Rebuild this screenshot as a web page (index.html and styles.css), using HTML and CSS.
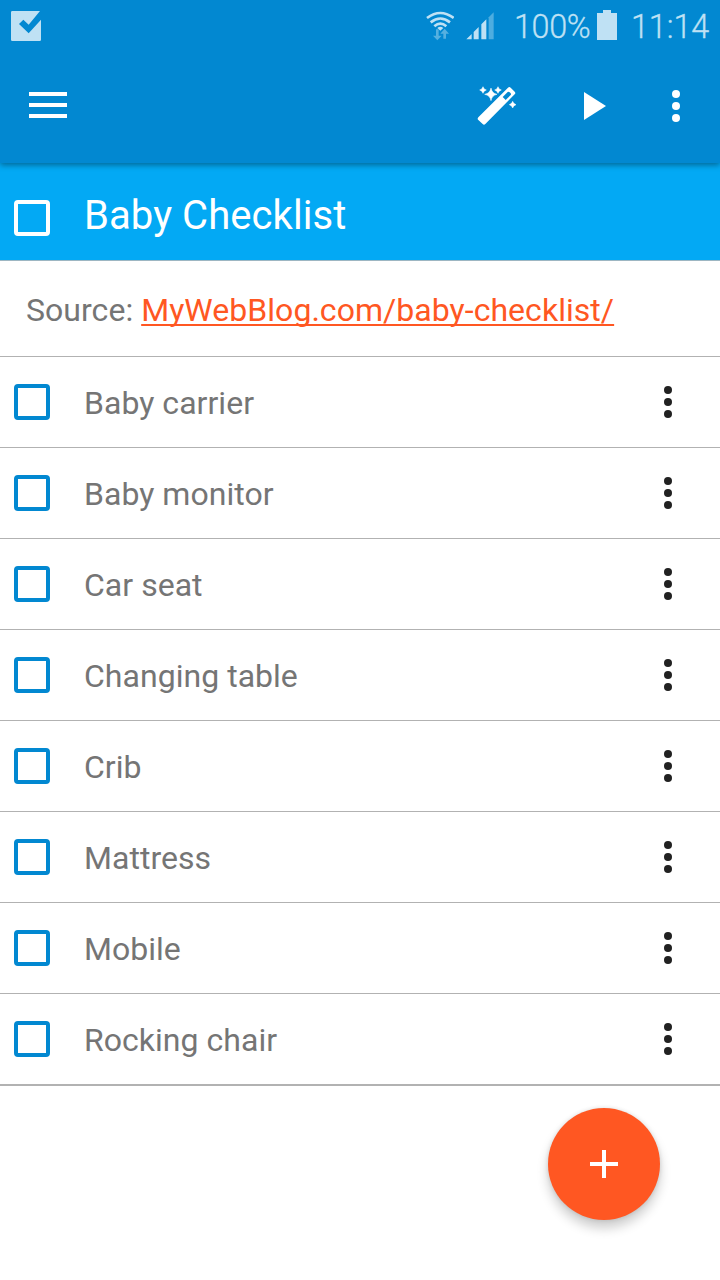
FILE: index.html
```html
<!DOCTYPE html>
<html lang="en">
<head>
<meta charset="utf-8">
<title>Baby Checklist</title>
<link rel="stylesheet" href="styles.css">
</head>
<body>
<svg width="0" height="0" class="defs">
  <symbol id="dots" viewBox="0 0 8 32"><circle cx="4" cy="4" r="4"/><circle cx="4" cy="16" r="4"/><circle cx="4" cy="28" r="4"/></symbol>
</svg>
<header class="appbar">
  <div class="status">
    <svg class="notice" width="30" height="30" viewBox="0 0 90 90"><path fill="#bfe1f4" d="M4 0H87L53 41L37 26L24 39L53 67L90 26V86Q90 90 86 90H4Q0 90 0 86V4Q0 0 4 0Z"/></svg>
    <svg class="wifi" width="28" height="30" viewBox="18 33 84 90">
      <g fill="none" stroke="#bfe1f4" stroke-width="8"><path d="M21 54Q61 24 101 54"/><path d="M32 67Q61 44 90 67"/><path d="M43 79Q61 63 79 79"/></g>
      <path fill="#bfe1f4" d="M52 84Q61 77 70 84L61 92Z"/>
      <path fill="#55b0e0" d="M48 88H56V107H65L52 121L39 107H48ZM70 116V101H61L74 86L87 101H78V116Z"/>
    </svg>
    <svg class="signal" width="28" height="28" viewBox="137 36 84 84"><path fill="#bfe1f4" d="M138 118L154 102V118ZM160 118V96L175 81V118ZM183 118V73L198 58V118Z"/><path fill="#4dade0" d="M205 118V52L220 37V118Z"/></svg>
    <span class="percent">100%</span>
    <svg class="battery" width="20" height="30" viewBox="0 0 20 30"><path fill="#bfe1f4" d="M6 0H14V3H20V30H0V3H6Z"/></svg>
    <span class="clock">11:14</span>
  </div>
  <nav class="toolbar">
    <svg class="menu" width="38" height="26" viewBox="0 0 38 26"><path fill="#fff" d="M0 0H38V4H0ZM0 11H38V15H0ZM0 22H38V26H0Z"/></svg>
    <svg class="wand" width="40" height="40" viewBox="50 48 120 120">
      <path fill="#fff" d="M143 53Q147 49 151 53L163 65Q167 69 163 73L75 162Q71 167 67 162L54 150Q50 146 54 142Z"/>
      <path fill="#0288d1" d="M127 81L142 66Q145 64 148 67L151 70Q153 73 151 75L136 90Z"/>
      <path fill="#fff" d="M92 54Q95 70 110 73Q95 76 92 92Q89 76 73 73Q89 70 92 54ZM68 50Q70 58 78 60Q70 62 68 70Q66 62 58 60Q66 58 68 50ZM113 50Q115 58 123 60Q115 62 113 70Q111 62 103 60Q111 58 113 50ZM157 94Q159 102 167 104Q159 106 157 114Q155 106 147 104Q155 102 157 94Z" stroke="#fff" stroke-width="1.5"/>
    </svg>
    <svg class="play" width="22" height="28" viewBox="0 0 22 28"><path fill="#fff" d="M0 0L22 14L0 28Z"/></svg>
    <svg class="more" width="8" height="32"><use href="#dots"/></svg>
  </nav>
</header>
<main>
  <div class="title"><span class="box"></span><h1>Baby Checklist</h1></div>
  <p class="source">Source: <a href="#">MyWebBlog.com/baby-checklist/</a></p>
  <ul class="list">
    <li><span class="box"></span><span class="name">Baby carrier</span><svg width="8" height="32"><use href="#dots"/></svg></li>
    <li><span class="box"></span><span class="name">Baby monitor</span><svg width="8" height="32"><use href="#dots"/></svg></li>
    <li><span class="box"></span><span class="name">Car seat</span><svg width="8" height="32"><use href="#dots"/></svg></li>
    <li><span class="box"></span><span class="name">Changing table</span><svg width="8" height="32"><use href="#dots"/></svg></li>
    <li><span class="box"></span><span class="name">Crib</span><svg width="8" height="32"><use href="#dots"/></svg></li>
    <li><span class="box"></span><span class="name">Mattress</span><svg width="8" height="32"><use href="#dots"/></svg></li>
    <li><span class="box"></span><span class="name">Mobile</span><svg width="8" height="32"><use href="#dots"/></svg></li>
    <li><span class="box"></span><span class="name">Rocking chair</span><svg width="8" height="32"><use href="#dots"/></svg></li>
  </ul>
</main>
<button class="fab" aria-label="Add"><svg width="28" height="28" viewBox="0 0 28 28"><path fill="#fff" d="M12 0H16V12H28V16H16V28H12V16H0V12H12Z"/></svg></button>
</body>
</html>
```
FILE: styles.css
```css
* { box-sizing: border-box; }
body { margin: 0; width: 720px; height: 1280px; background: #fff; font-family: Roboto, "Liberation Sans", sans-serif; overflow: hidden; }
svg { display: block; flex: none; }
.defs { position: absolute; }
.appbar { position: relative; z-index: 1; height: 163px; background: #0288d1; box-shadow: 0 2px 6px rgba(0,0,0,.4); }
.status { display: flex; align-items: flex-start; height: 50px; padding: 0 10px 0 11px; color: #bfe1f4; font-size: 32.4px; font-weight: 300; line-height: 39px; -webkit-text-stroke: .3px #bfe1f4; }
.notice { margin: 11px auto 0 0; }
.wifi { margin: 11px 12px 0 0; }
.signal { margin: 12px 20px 0 0; }
.percent { width: 83px; margin-top: 8px; letter-spacing: -.4px; white-space: nowrap; }
.battery { margin: 10px 14px 0 0; }
.clock { width: 79px; margin-top: 8px; letter-spacing: -.1px; white-space: nowrap; }
.toolbar { display: flex; align-items: center; height: 112px; padding: 0 40px 0 29px; }
.more { fill: #fff; }
.menu { margin: 0 auto 2px 0; }
.wand { margin-right: 67px; }
.play { margin-right: 66px; }
.title { display: flex; align-items: center; height: 98px; padding: 13px 14px 0; background: #03a9f4; border-bottom: 1px solid #9db6c2; }
.box { flex: none; width: 36px; height: 36px; border: 4px solid #0288d1; border-radius: 4px; }
.title .box { border-color: #fff; }
.title h1 { margin: 0 0 5px 34px; color: #fff; font-size: 40px; font-weight: 400; line-height: 47px; letter-spacing: .07px; }
.source { height: 96px; margin: 0; padding: 30px 26px 0; border-bottom: 1px solid #b2b2b2; color: #757575; font-size: 32px; line-height: 38px; letter-spacing: .04px; }
.source a { color: #ff5722; text-decoration-thickness: 2px; text-underline-offset: 3px; text-decoration-skip-ink: none; }
.list { margin: 0; padding: 0; list-style: none; fill: #212121; }
.list li { display: flex; align-items: center; height: 91px; padding: 0 48px 0 14px; border-bottom: 1px solid #b2b2b2; }
.list li:last-child { height: 92px; border-bottom-width: 2px; }
.name { margin: 2px auto 0 34px; color: #757575; font-size: 32px; line-height: 38px; letter-spacing: .03px; }
.fab { position: absolute; left: 548px; top: 1108px; display: grid; place-items: center; width: 112px; height: 112px; padding: 0; border: 0; border-radius: 50%; background: #ff5722; box-shadow: 0 8px 12px rgba(0,0,0,.2), 0 0 4px rgba(0,0,0,.12); }
```
